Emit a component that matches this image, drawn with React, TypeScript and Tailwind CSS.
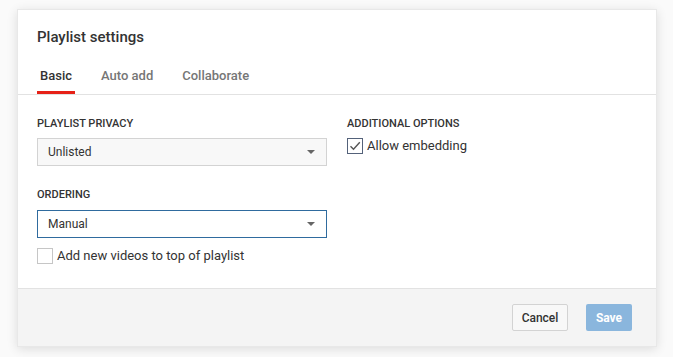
export default function App() {
  return (
    <div className="w-[673px] h-[357px] bg-[#fafafa] pl-[17px] pt-[9px] font-['Roboto',_'Liberation_Sans',_sans-serif] text-[#333]">
      <div className="w-[640px] h-[338px] bg-white border border-[#e8e8e8] shadow-[0_2px_10px_rgba(0,0,0,0.12)] flex flex-col">
        {/* header */}
        <div className="px-[19px] pt-[17px]">
          <h1 className="text-[15px] leading-5 font-medium text-[#333]">Playlist settings</h1>
        </div>
        <div className="flex gap-[23px] px-[19px] mt-[21px] border-b border-[#e2e2e2]">
          <div className="px-[3px] pb-[7px] border-b-[3px] border-[#e62117] text-[13px] leading-4 font-medium text-[#333]">
            Basic
          </div>
          <div className="px-[3px] pb-[10px] text-[13px] leading-4 font-medium text-[#767676]">Auto add</div>
          <div className="px-[3px] pb-[10px] text-[13px] leading-4 font-medium text-[#767676]">Collaborate</div>
        </div>

        {/* body */}
        <div className="flex-1 flex gap-5 px-[19px] pt-[22px]">
          <div className="w-[290px] flex flex-col">
            <div className="text-[11px] leading-[14px] font-medium text-[#333]">PLAYLIST PRIVACY</div>
            <div className="mt-[7px] h-[28px] flex items-center justify-between bg-[#f8f8f8] border border-[#d3d3d3] pl-[10px] pr-[11px] text-[12px] text-[#333]">
              <span>Unlisted</span>
              <Caret />
            </div>
            <div className="mt-[22px] text-[11px] leading-[14px] font-medium text-[#333]">ORDERING</div>
            <div className="mt-[8px] h-[28px] flex items-center justify-between bg-white border border-[#2f6b9e] pl-[10px] pr-[11px] text-[12px] text-[#333]">
              <span>Manual</span>
              <Caret />
            </div>
            <label className="mt-[8px] flex items-center gap-[4px] text-[13px] text-[#333]">
              <span className="w-4 h-4 border border-[#c6c6c6] bg-white" />
              Add new videos to top of playlist
            </label>
          </div>
          <div className="flex flex-col">
            <div className="text-[11px] leading-[14px] font-medium text-[#333]">ADDITIONAL OPTIONS</div>
            <label className="mt-[5px] flex items-center gap-[4px] text-[13px] text-[#333]">
              <span className="w-4 h-4 border border-[#54627a] bg-white flex items-center justify-center">
                <svg width="12" height="12" viewBox="0 0 12 12">
                  <path d="M1.5 6.2 L4.5 9.2 L10.8 2.2" fill="none" stroke="#555" strokeWidth="1.4" />
                </svg>
              </span>
              Allow embedding
            </label>
          </div>
        </div>

        {/* footer */}
        <div className="h-[58px] bg-[#f4f4f4] border-t border-[#e2e2e2] flex justify-end items-start gap-[18px] pt-[15px] pr-[24px]">
          <button className="h-[27px] w-[56px] bg-[#f8f8f8] border border-[#d3d3d3] rounded-[2px] text-[12px] font-medium text-[#333]">
            Cancel
          </button>
          <button className="h-[27px] w-[46px] bg-[#8ab6dd] rounded-[2px] text-[12px] font-bold text-white">
            Save
          </button>
        </div>
      </div>
    </div>
  );
}

function Caret() {
  return (
    <svg width="8" height="4" viewBox="0 0 8 4">
      <path d="M0 0 L8 0 L4 4 Z" fill="#666" />
    </svg>
  );
}
